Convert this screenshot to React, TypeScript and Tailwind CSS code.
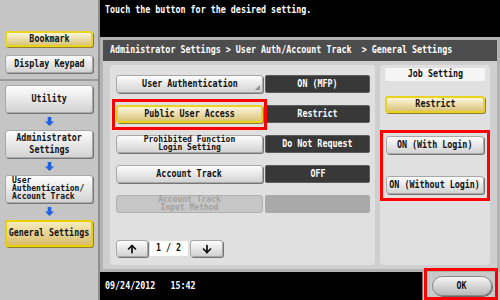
import type { ReactNode } from "react";
import { ArrowUp, ArrowDown } from "lucide-react";

// condensed bitmap-ish look: mono font squeezed horizontally
function Lbl({ children, left }: { children: ReactNode; left?: boolean }) {
  return (
    <span
      className={
        left
          ? "inline-block origin-left scale-x-[0.76] whitespace-pre"
          : "inline-block scale-x-[0.76] whitespace-pre"
      }
    >
      {children}
    </span>
  );
}

const grayBtn =
  "flex min-w-0 items-center justify-center rounded-[3px] border border-[#a8a8a8] bg-linear-to-b from-[#fdfdfd] to-[#d3d3d3] shadow-[1px_1px_0_#767676]";
const yellowBtn =
  "flex min-w-0 items-center justify-center rounded-[3px] border-2 border-[#ead21e] bg-linear-to-b from-[#fbf6dc] to-[#dac47a] shadow-[1px_1px_0_#8c7c34]";
const valueBox =
  "flex min-w-0 flex-1 items-center justify-center rounded-[2px] border border-[#5c5c5c] bg-[#383838] text-white";

function BlueArrow() {
  return (
    <div className="flex h-[17px] items-center justify-center">
      <svg width="9" height="9" viewBox="0 0 10 10">
        <path d="M3 0h4v5h3l-5 5-5-5h3z" fill="#1f62e4" />
      </svg>
    </div>
  );
}

function Row({ label, value }: { label: ReactNode; value: string }) {
  return (
    <div className="flex h-[18px] gap-[2px]">
      <div className={`${grayBtn} w-[147px] shrink-0`}>{label}</div>
      <div className={valueBox}>
        <Lbl>{value}</Lbl>
      </div>
    </div>
  );
}

export default function App() {
  return (
    <div className="flex h-[300px] w-[500px] overflow-hidden bg-black font-['DejaVu_Sans_Mono',monospace] text-[11px] font-bold text-[#111]">
      {/* left nav */}
      <aside className="flex w-[100px] shrink-0 flex-col border-r-2 border-[#8e8e8e] bg-[#c5c5c5]">
        <div className="flex h-[81px] flex-col gap-[8px] border-b-2 border-[#9a9a9a] px-[5px] pt-[31px]">
          <div className={`${yellowBtn} h-[16px]`}>
            <Lbl>Bookmark</Lbl>
          </div>
          <div className={`${grayBtn} h-[18px]`}>
            <Lbl>Display Keypad</Lbl>
          </div>
        </div>
        <div className="flex flex-col px-[5px] pt-[4px]">
          <div className={`${grayBtn} h-[28px]`}>
            <Lbl>Utility</Lbl>
          </div>
          <BlueArrow />
          <div className={`${grayBtn} h-[28px] flex-col leading-[12px]`}>
            <Lbl>Administrator</Lbl>
            <Lbl>Settings</Lbl>
          </div>
          <BlueArrow />
          <div className="flex h-[28px] flex-col justify-center rounded-[3px] border border-[#a8a8a8] bg-linear-to-b from-[#fdfdfd] to-[#d3d3d3] pl-[6px] text-[8px] leading-[8px] shadow-[1px_1px_0_#767676]">
            <span>User</span>
            <span>Authentication/</span>
            <span>Account Track</span>
          </div>
          <BlueArrow />
          <div className="flex h-[27px] items-center justify-center rounded-[3px] border-2 border-[#ead000] bg-linear-to-b from-[#f6ebbd] to-[#d9bd6c] shadow-[1px_1px_0_#8c7c34]">
            <Lbl>General Settings</Lbl>
          </div>
        </div>
      </aside>

      <main className="flex min-w-0 flex-1 flex-col">
        <div className="h-[37px] overflow-hidden pl-[5px] pt-[2px] text-white">
          <Lbl left>Touch the button for the desired setting.</Lbl>
        </div>

        <section className="flex h-[235px] flex-col border-[3px] border-[#b3b3b3] bg-[#cfcfcf]">
          <div className="flex h-[21px] items-center overflow-hidden bg-[#4d4d4d] pl-[7px] text-white">
            <Lbl left>Administrator Settings &gt; User Auth/Account Track  &gt; General Settings</Lbl>
          </div>

          <div className="flex min-h-0 flex-1 gap-[5px] px-[7px] py-[4px]">
            <div className="flex min-w-0 flex-1 flex-col gap-[12px] rounded-[4px] bg-[#e0e0e0] pt-[10px] pr-[5px] pb-[8px] pl-[6px]">
              <div className="flex h-[18px] gap-[2px]">
                <div className={`${grayBtn} relative w-[147px] shrink-0`}>
                  <Lbl>User Authentication</Lbl>
                  <svg className="absolute right-[2px] bottom-[2px]" width="5" height="5" viewBox="0 0 5 5">
                    <path d="M5 0v5H0z" fill="#8c8c8c" />
                  </svg>
                </div>
                <div className={valueBox}>
                  <Lbl>ON (MFP)</Lbl>
                </div>
              </div>

              <div className="flex h-[18px] gap-[2px]">
                <div className="relative w-[147px] shrink-0">
                  <div className={`${yellowBtn} h-full`}>
                    <Lbl>Public User Access</Lbl>
                  </div>
                  <span className="absolute -top-[6px] -right-[4px] -bottom-[7px] -left-[4px] border-[3px] border-[#ff0000]" />
                </div>
                <div className={valueBox}>
                  <Lbl>Restrict</Lbl>
                </div>
              </div>

              <Row
                label={
                  <div className="flex flex-col items-center text-[8px] leading-[8px]">
                    <span>Prohibited Function</span>
                    <span>Login Setting</span>
                  </div>
                }
                value="Do Not Request"
              />
              <Row label={<Lbl>Account Track</Lbl>} value="OFF" />

              <div className="flex h-[18px] gap-[2px]">
                <div className="flex w-[147px] shrink-0 flex-col items-center justify-center rounded-[3px] border border-[#b0b0b0] bg-[#c6c6c6] text-[8px] leading-[8px] text-[#a2a2a2]">
                  <span>Account Track</span>
                  <span>Input Method</span>
                </div>
                <div className="flex-1 rounded-[2px] bg-[#a9a9a9]" />
              </div>

              <div className="mt-auto flex h-[17px] items-center gap-[2px]">
                <div className={`${grayBtn} h-full w-[32px]`}>
                  <ArrowUp size={12} strokeWidth={3.5} color="#111" />
                </div>
                <div className="flex h-[15px] w-[38px] items-center justify-center bg-white">
                  <Lbl>1 / 2</Lbl>
                </div>
                <div className={`${grayBtn} h-full w-[33px]`}>
                  <ArrowDown size={12} strokeWidth={3.5} color="#111" />
                </div>
              </div>
            </div>

            <div className="flex w-[110px] shrink-0 flex-col rounded-[4px] bg-[#e0e0e0] px-[5px] pt-[3px]">
              <div className="flex h-[13px] items-center justify-center rounded-[2px] bg-[#f5f5f5]">
                <Lbl>Job Setting</Lbl>
              </div>
              <div className={`${yellowBtn} mt-[15px] h-[17px]`}>
                <Lbl>Restrict</Lbl>
              </div>
              <div className="-mx-[5px] mt-[17px] flex h-[71px] flex-col gap-[22px] border-[3px] border-[#ff0000] px-[3px] pt-[3px]">
                <div className={`${grayBtn} h-[18px]`}>
                  <Lbl>ON (With Login)</Lbl>
                </div>
                <div className={`${grayBtn} h-[18px]`}>
                  <Lbl>ON (Without Login)</Lbl>
                </div>
              </div>
            </div>
          </div>
        </section>

        <footer className="flex h-[28px]">
          <div className="flex min-w-0 flex-1 items-center pl-[5px] text-white">
            <Lbl left>09/24/2012   15:42</Lbl>
          </div>
          <div className="relative flex w-[78px] shrink-0 items-center justify-center border-l border-[#7a7a7a] bg-[#c9c9c9]">
            <div className="flex h-[20px] w-[60px] items-center justify-center rounded-full border border-[#8a8a8a] bg-linear-to-b from-[#f4f4f4] to-[#b9b9b9] shadow-[1px_1px_0_#6a6a6a]">
              <Lbl>OK</Lbl>
            </div>
            <span className="absolute -top-[4px] right-[2px] bottom-0 left-[1px] border-[3px] border-[#ff0000]" />
          </div>
        </footer>
      </main>
    </div>
  );
}
